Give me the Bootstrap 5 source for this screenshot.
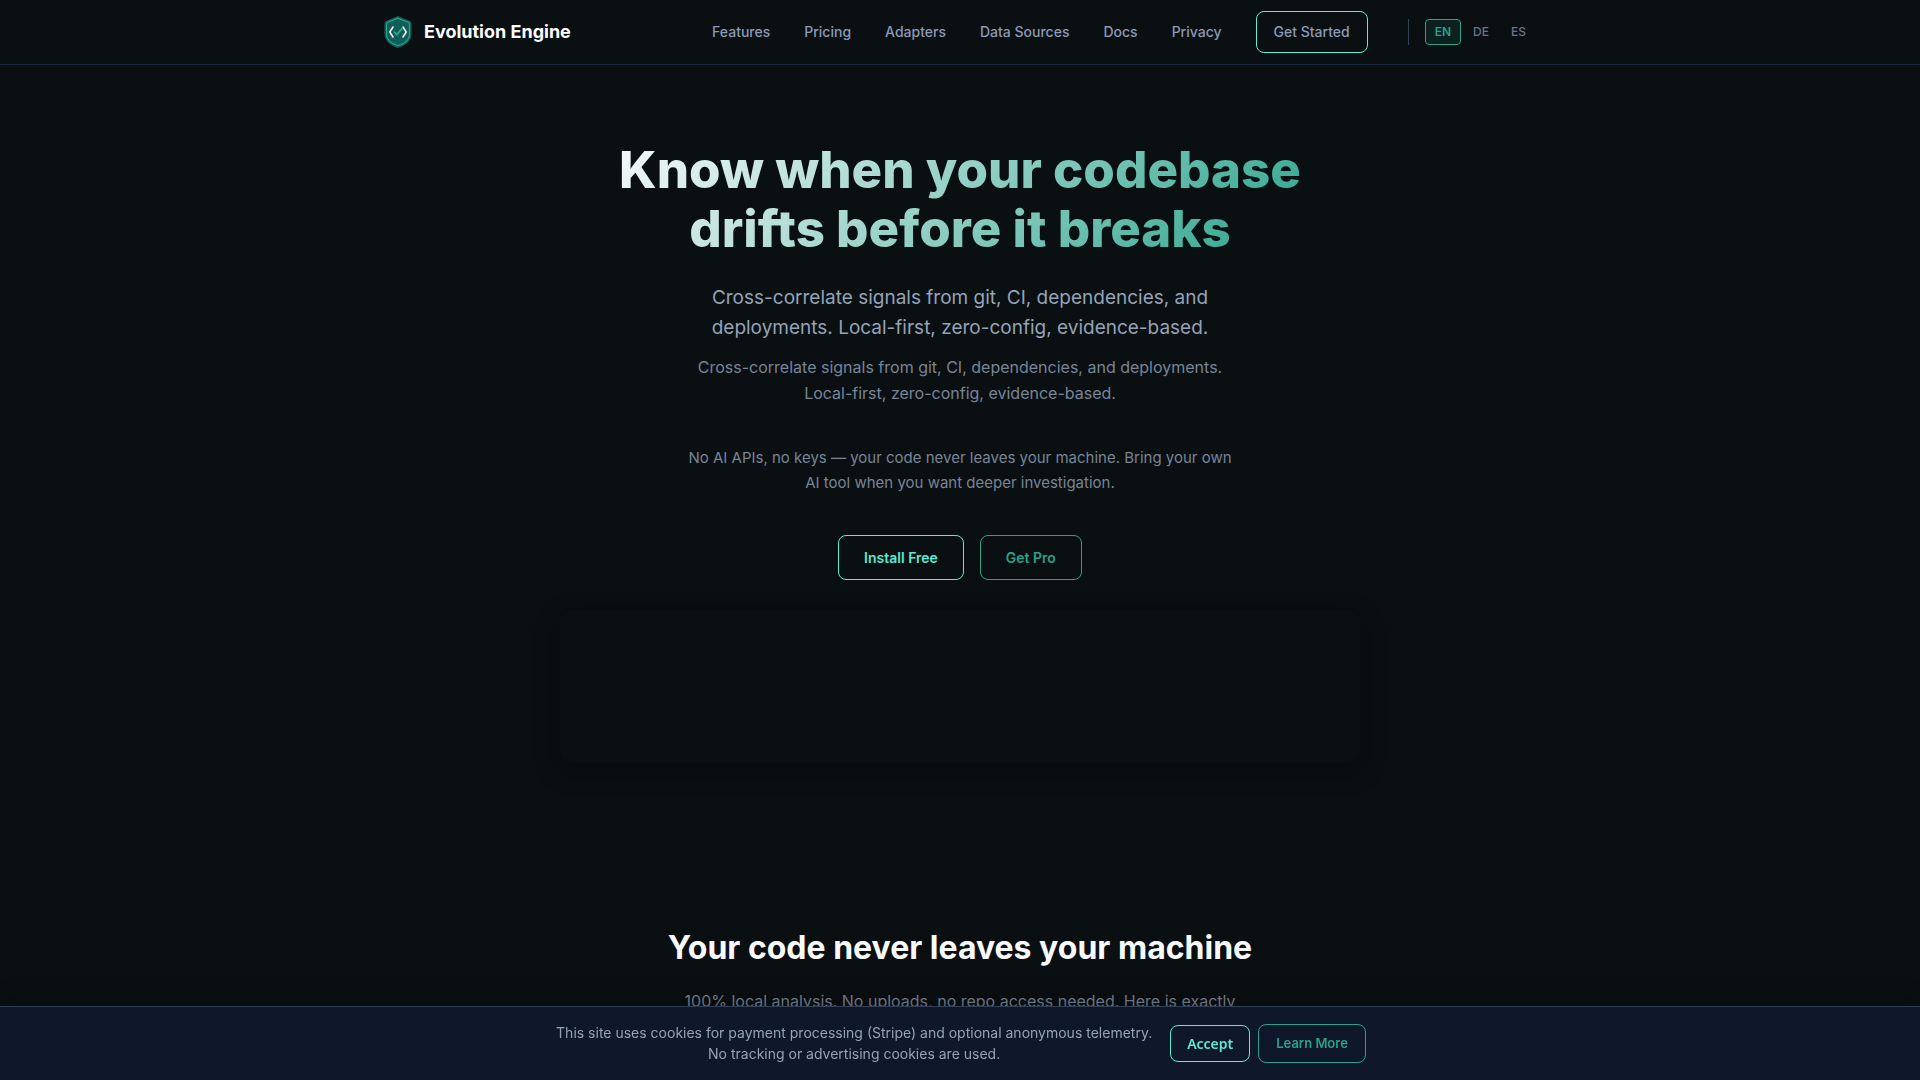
<!DOCTYPE html>
<html lang="en">
<head>
<meta charset="utf-8">
<meta name="viewport" content="width=device-width, initial-scale=1">
<title>Evolution Engine</title>
<link href="https://cdn.jsdelivr.net/npm/bootstrap@5.3.0/dist/css/bootstrap.min.css" rel="stylesheet">
<style>
:root { --ee-bg: #0a0f12; --ee-muted: #94a3b8; --ee-dim: #788597; --ee-teal: #28a38a; --ee-mint: #5eead4; }
body { background: var(--ee-bg); color: var(--ee-muted); font-family: Inter, sans-serif; overflow-x: hidden; }
a { text-decoration: none; }
.site-nav { background: var(--ee-bg); border-bottom: 1px solid #1e293b; min-height: 65px; }
.site-wrap { max-width: 1200px; padding: 0 24px; }
.brand { color: #fff; font-size: 18px; font-weight: 700; line-height: 26px; gap: 12px; }
.nav-links { gap: 34px; font-size: 14px; font-weight: 500; }
.nav-links a { color: #8b9ab5; line-height: 24px; }
.nav-links .started { border: 1px solid var(--ee-mint); border-radius: 8px; padding: 8px 17px; }
.nav-links .langs { border-left: 1px solid #334155; margin-left: 6px; padding-left: 16px; gap: 2px; font-size: 12px; }
.nav-links .langs a { color: #64748b; padding: 3px 9px; border: 1px solid transparent; border-radius: 4px; line-height: 18px; }
.nav-links .langs .current { color: var(--ee-teal); border-color: var(--ee-teal); background: rgba(42,157,143,.12); font-weight: 600; }
.hero { padding: 75px 24px 128px; }
.hero h1 { max-width: 700px; margin: 0 auto 25px; font-size: 51px; line-height: 59px; font-weight: 800; background: linear-gradient(135deg, #f8fafc 0%, var(--ee-teal) 100%); -webkit-background-clip: text; background-clip: text; color: transparent; }
.hero p { max-width: 560px; margin: 0 auto; }
.hero .tagline { font-size: 19px; line-height: 30px; margin-bottom: 11px; }
.hero .subline { font-size: 16px; line-height: 26px; color: var(--ee-dim); margin-bottom: 39px; }
.hero .privacy { font-size: 15px; line-height: 25px; color: var(--ee-dim); margin-bottom: 40px; }
.ee-btn { background: transparent; border: 1px solid var(--ee-teal); border-radius: 8px; color: var(--ee-teal); font-size: 14px; font-weight: 600; line-height: 21px; padding: 11px 25px; }
.ee-btn.bright { border-color: var(--ee-mint); color: var(--ee-mint); }
.demo { max-width: 800px; height: 152px; margin: 30px auto 0; border-radius: 12px; background: var(--ee-bg); box-shadow: 0 8px 24px rgba(6,4,12,.45); }
.trust { padding: 34px 24px 96px; }
.trust h2 { color: #f8fafc; font-size: 32px; line-height: 48px; font-weight: 700; margin: 0 0 16px; }
.trust p { max-width: 600px; margin: 0 auto; font-size: 16px; line-height: 27px; color: var(--ee-dim); }
.cookie-bar { background: #0f172a; border-top: 1px solid #334155; padding: 15px 24px 16px; box-shadow: 0 -4px 24px rgba(0,0,0,.3); gap: 16px; }
.cookie-bar p { flex: 0 1 600px; font-size: 14px; line-height: 21px; margin: 0; }
.cookie-bar .ee-btn { font-size: 13px; padding: 8px 17px; }
.cookie-bar .accept { font-family: "Noto Sans", sans-serif; font-size: 14px; padding: 7px 16px; }
</style>
<script src="https://cdn.jsdelivr.net/npm/bootstrap@5.3.0/dist/js/bootstrap.bundle.min.js"></script>
</head>
<body>
<header class="site-nav d-flex align-items-center">
  <div class="site-wrap container-fluid d-flex align-items-center justify-content-between">
    <a class="brand d-flex align-items-center" href="#">
      <svg width="28" height="32" viewBox="0 0 28 32" fill="none" aria-hidden="true">
        <path d="M14 0 26 5Q27.500 5.700 27.500 7.500V18C27.500 25 21.500 29.500 14 32 6.500 29.500.5 25 .5 18V7.500Q.5 5.700 2 5Z" fill="#115e59"/>
        <path d="M14 2.200 24 6.200Q25.500 6.800 25.500 8.500V18C25.500 23.700 20.500 27.700 14 29.700 7.500 27.700 2.500 23.700 2.500 18V8.500Q2.500 6.800 4 6.200Z" stroke="#28a38a" stroke-width="1.200"/>
        <path d="M9 11 5.800 16 9 21M19 11 22.200 16 19 21" stroke="#fff" stroke-width="1.500" stroke-linecap="round" stroke-linejoin="round"/>
        <path d="M10.300 16 12.800 18.700 18 12.500" stroke="#2fb39c" stroke-width="1.500" stroke-linecap="round" stroke-linejoin="round"/>
      </svg>
      <span>Evolution Engine</span>
    </a>
    <nav class="nav-links d-flex align-items-center">
      <a href="#">Features</a><a href="#">Pricing</a><a href="#">Adapters</a><a href="#">Data Sources</a><a href="#">Docs</a><a href="#">Privacy</a>
      <a class="started" href="#">Get Started</a>
      <div class="langs d-flex"><a class="current" href="#">EN</a><a href="#">DE</a><a href="#">ES</a></div>
    </nav>
  </div>
</header>
<main class="text-center">
  <section class="hero">
    <h1>Know when your codebase drifts before it breaks</h1>
    <p class="tagline">Cross-correlate signals from git, CI, dependencies, and deployments. Local-first, zero-config, evidence-based.</p>
    <p class="subline">Cross-correlate signals from git, CI, dependencies, and deployments. Local-first, zero-config, evidence-based.</p>
    <p class="privacy">No AI APIs, no keys — your code never leaves your machine. Bring your own AI tool when you want deeper investigation.</p>
    <div class="d-flex justify-content-center gap-3">
      <a class="ee-btn bright" href="#">Install Free</a>
      <a class="ee-btn" href="#">Get Pro</a>
    </div>
    <div class="demo"></div>
  </section>
  <section class="trust">
    <h2>Your code never leaves your machine</h2>
    <p>100% local analysis. No uploads, no repo access needed. Here is exactly</p>
  </section>
</main>
<aside class="cookie-bar fixed-bottom d-flex align-items-center justify-content-center" aria-label="Cookie notice">
  <p class="text-center">This site uses cookies for payment processing (Stripe) and optional anonymous telemetry. No tracking or advertising cookies are used.</p>
  <div class="d-flex align-items-center gap-2">
    <button class="ee-btn bright accept" type="button">Accept</button>
    <a class="ee-btn" href="#">Learn More</a>
  </div>
</aside>
</body>
</html>
